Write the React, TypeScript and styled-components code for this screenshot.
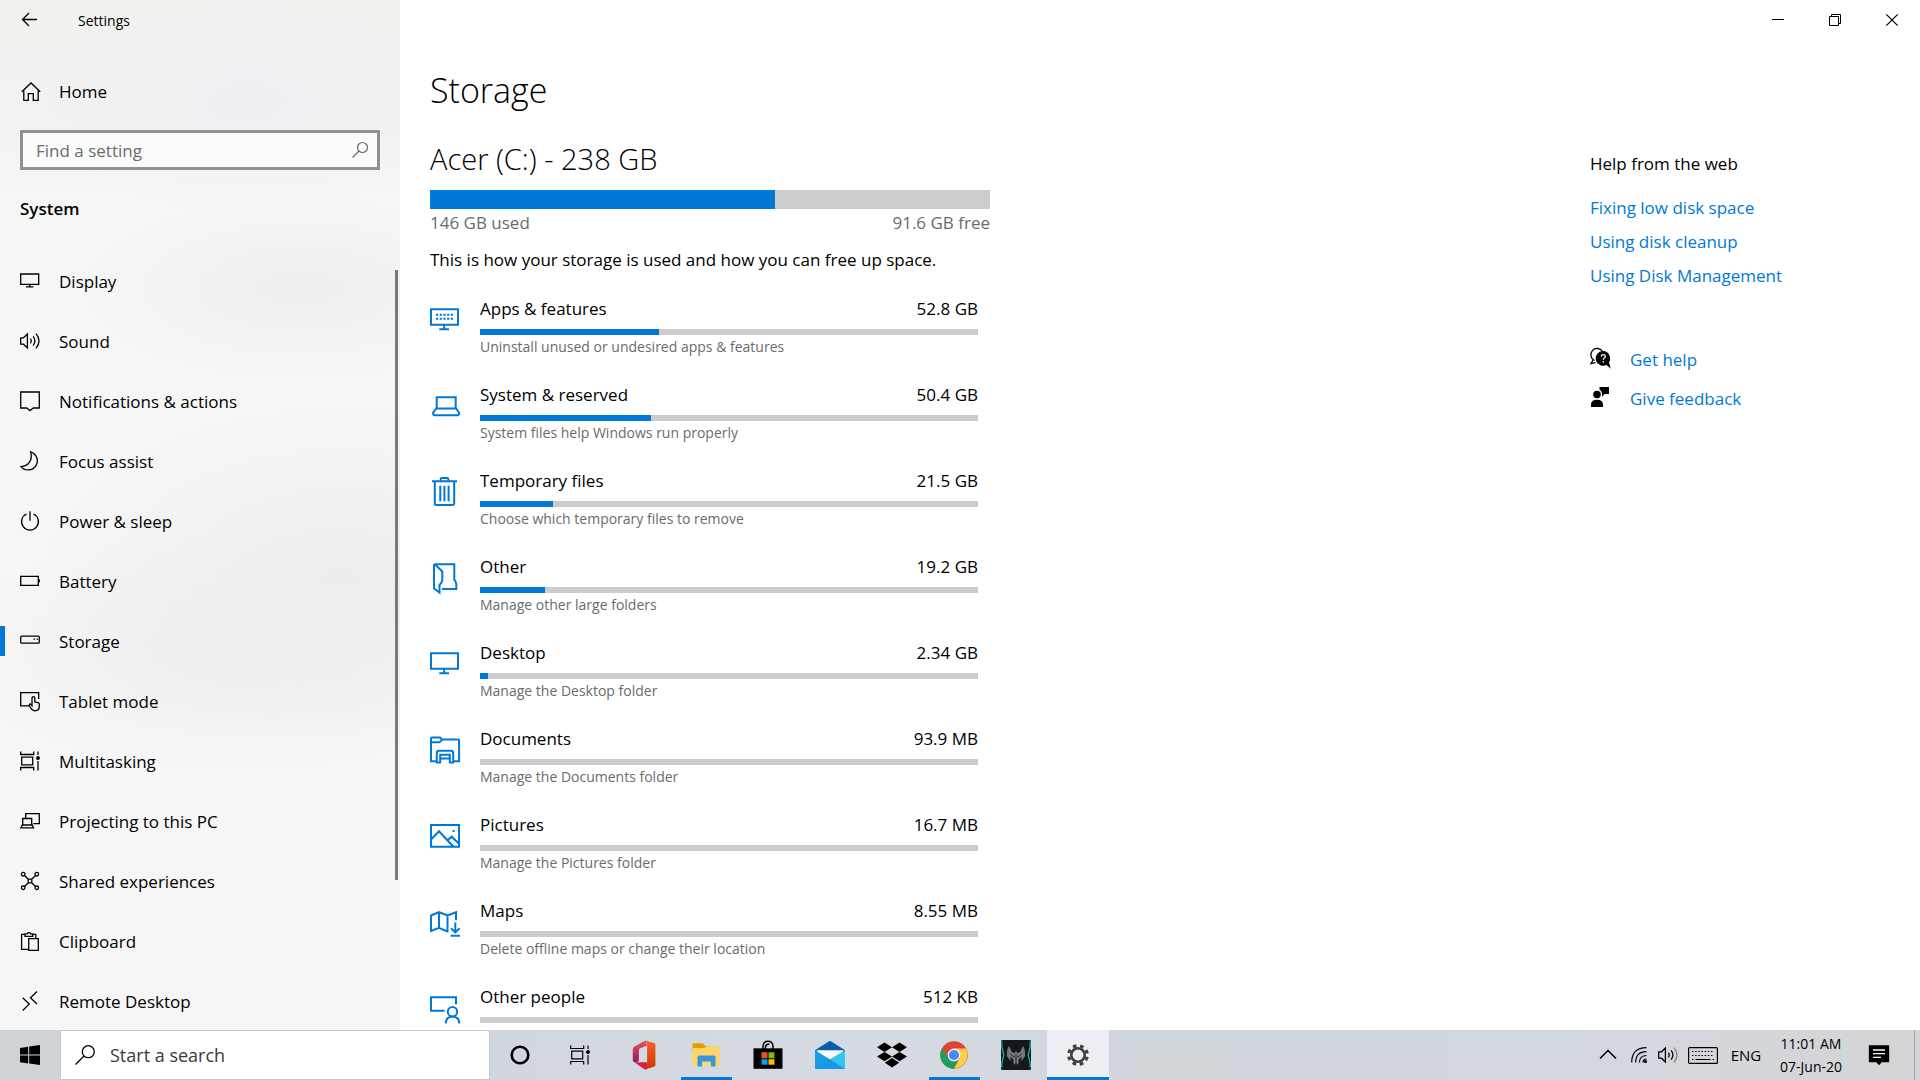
import React from "react";
import styled, { createGlobalStyle, css } from "styled-components";

const ACCENT = "#0078d7";
const FONT = '"Segoe UI", "Open Sans", "Noto Sans", sans-serif';

const GlobalStyle = createGlobalStyle`
  *, *::before, *::after { box-sizing: border-box; }
  body { margin: 0; background: #fff; color: #000; font-family: ${FONT}; font-size: 17px; line-height: 24px; overflow: hidden; }
  button, input { font: inherit; color: inherit; }
  h1, h2, h3, p, ul { margin: 0; padding: 0; font-weight: 400; }
  ul { list-style: none; }
  a { text-decoration: none; }
  svg { display: block; flex: none; overflow: visible; }
`;

/* ---------- icon plumbing ---------- */

const LineSvg = styled.svg<{ $weight?: number }>`
  fill: none;
  stroke: currentColor;
  stroke-width: ${(p) => p.$weight ?? 1.3};
`;

type GlyphProps = { size?: number; weight?: number; children: React.ReactNode };

const Glyph = ({ size = 20, weight, children }: GlyphProps) => (
  <LineSvg width={size} height={size} viewBox={`0 0 ${size} ${size}`} $weight={weight} aria-hidden="true">
    {children}
  </LineSvg>
);

const SpeakerPaths = ({ faint = false }: { faint?: boolean }) => (
  <>
    <path d="M.7 6.8h2.8L7.4 3v14L3.5 13.2H.7z" />
    <path d="M10.5 7.6q1.6 2.4 0 4.8" />
    <path d="M13.2 5.4q3.4 4.6 0 9.2" />
    <path d="M16 2.7q6 7.3 0 14.6" opacity={faint ? 0.4 : 1} />
  </>
);

const TaskViewPaths = () => (
  <>
    <path d="M.7 .5v3h13v-3M.7 19.5v-3h13v3M1.700 6.200h11v7.600h-11zM18 .5v3.400M18 10v9.500" />
    <circle cx="18" cy="7" r="1.3" fill="currentColor" />
  </>
);

/* ---------- window shell ---------- */

const Screen = styled.div`
  display: flex;
  flex-direction: column;
  height: 100vh;
`;

const Window = styled.div`
  flex: 1;
  min-height: 0;
  display: flex;
`;

const Sidebar = styled.aside`
  width: 400px;
  flex: none;
  display: flex;
  flex-direction: column;
  background:
    radial-gradient(ellipse 210px 110px at 62% 10%, #eeeff3 0%, transparent 100%),
    radial-gradient(ellipse 220px 90px at 75% 28%, #eeeeee 0%, transparent 100%),
    radial-gradient(ellipse 300px 170px at 85% 56%, #ecedee 0%, transparent 100%),
    radial-gradient(ellipse 300px 120px at 60% 63%, #eeeeee 0%, transparent 100%),
    linear-gradient(#f1f1ee 0, #f2f2f1 12%, #f6f6f6 19%, #f6f6f6 100%);
`;

const TitleRow = styled.div`
  display: flex;
  align-items: center;
  height: 40px;
  font-size: 14px;
`;

const BackButton = styled.button`
  width: 60px;
  height: 40px;
  padding: 0 0 0 20px;
  border: 0;
  background: none;
`;

const AppName = styled.span`
  padding: 2px 0 0 18px;
`;

const HomeLink = styled.a`
  display: flex;
  align-items: center;
  gap: 18px;
  height: 50px;
  margin-top: 27px;
  padding-left: 21px;
  color: #000;
`;

const SearchField = styled.label`
  display: flex;
  align-items: center;
  height: 40px;
  margin: 13px 20px 0;
  padding: 0 7px 0 13px;
  border: 3px solid #919191;
  background: #fafbfb;
  color: #6b6b6b;
`;

const SearchInput = styled.input`
  flex: 1;
  min-width: 0;
  padding: 2px 0 0;
  border: 0;
  outline: 0;
  background: none;
  &::placeholder { color: #6b6b6b; opacity: 1; }
`;

const Section = styled.h2`
  padding: 27px 20px 30px;
  font-size: 17px;
  line-height: 24px;
  && { font-weight: 600; }
`;

const NavArea = styled.div`
  flex: 1;
  min-height: 0;
  overflow: hidden;
  display: flex;
`;

const NavList = styled.ul`
  flex: 1;
`;

const NavLink = styled.a<{ $current?: boolean }>`
  display: flex;
  align-items: center;
  gap: 19px;
  height: 60px;
  color: #000;
  &::before {
    content: "";
    width: 5px;
    height: 30px;
    margin-right: -4px;
    background: ${(p) => (p.$current ? ACCENT : "transparent")};
  }
`;

const NavLabel = styled.span`
  padding-top: 2px;
`;

const ScrollThumb = styled.div`
  width: 3px;
  height: 610px;
  margin: 19px 2px 0 0;
  background: #7a7a7a;
`;

const Main = styled.main`
  flex: 1;
  min-width: 0;
  display: flex;
  flex-direction: column;
`;

const WindowControls = styled.div`
  display: flex;
  justify-content: flex-end;
  height: 40px;
`;

const ControlButton = styled.button`
  display: grid;
  place-items: center;
  width: 57px;
  height: 40px;
  padding: 0;
  border: 0;
  background: none;
`;

const Columns = styled.div`
  flex: 1;
  min-height: 0;
  display: flex;
  justify-content: space-between;
  margin-bottom: 6px;
  padding-left: 30px;
  overflow: hidden;
`;

const Content = styled.section`
  width: 560px;
`;

const PageTitle = styled.h1`
  padding-top: 26px;
  font-size: 34px;
  line-height: 48px;
  && { font-weight: 300; }
`;

const DriveTitle = styled.h2`
  padding: 25px 0 11px;
  font-size: 29px;
  line-height: 40px;
  && { font-weight: 300; }
`;

const Meter = styled.div<{ $thick?: boolean }>`
  height: ${(p) => (p.$thick ? 19 : 6)}px;
  background: #ccc;
`;

const MeterFill = styled.div`
  height: 100%;
  background: ${ACCENT};
`;

const Spread = styled.div<{ $muted?: boolean }>`
  display: flex;
  justify-content: space-between;
  ${(p) => p.$muted && css`
    padding-top: 2px;
    color: #6b6b6b;
  `}
`;

const Intro = styled.p`
  padding: 13px 0 25px;
`;

const Row = styled.li`
  display: flex;
  gap: 20px;
  height: 86px;
  padding-right: 12px;
`;

const RowIcon = styled.span`
  padding-top: 7px;
  color: ${ACCENT};
`;

const RowBody = styled.div`
  flex: 1;
`;

const RowHead = styled(Spread)`
  padding-bottom: 8px;
`;

const RowNote = styled.p`
  font-size: 14px;
  line-height: 24px;
  color: #6b6b6b;
`;

const Help = styled.aside`
  width: 330px;
  padding-top: 112px;
`;

const HelpTitle = styled.h3`
  padding-bottom: 15px;
  font-size: 17px;
  line-height: 24px;
`;

const WebLink = styled.a`
  display: block;
  padding: 5px 0;
  color: ${ACCENT};
`;

const SupportList = styled.div`
  padding-top: 50px;
`;

const SupportLink = styled.a`
  display: flex;
  gap: 20px;
  height: 39px;
  padding-top: 5px;
  color: ${ACCENT};
  svg { color: #000; }
`;

/* ---------- taskbar ---------- */

const Taskbar = styled.footer`
  flex: none;
  display: flex;
  align-items: stretch;
  height: 50px;
  background: linear-gradient(90deg, #cfd3d6 0, #d2d6df 28%, #d6dae2 45%, #d0d5da 62%, #d3d7e0 82%, #d5d6da 90%, #d4d4d7 100%);
`;

const TaskButton = styled.button<{ $width?: number; $running?: boolean; $focused?: boolean }>`
  display: grid;
  place-items: center;
  width: ${(p) => p.$width ?? 62}px;
  padding: 0;
  border: 0;
  background: ${(p) => (p.$focused ? "#eceef3" : "none")};
  ${(p) => p.$running && css`
    background-image: linear-gradient(${ACCENT}, ${ACCENT});
    background-repeat: no-repeat;
    background-position: bottom center;
    background-size: ${p.$focused ? "100%" : "51px"} 3px;
  `}
`;

const TaskSearch = styled.label`
  display: flex;
  align-items: center;
  gap: 15px;
  width: 430px;
  padding-left: 14px;
  border: 1px solid #c8c8c8;
  background: #fff;
  font-size: 18px;
`;

const TaskSearchInput = styled(SearchInput)`
  padding: 0;
  &::placeholder { color: #3a3a3a; }
`;

const Apps = styled.div`
  display: flex;
  margin-left: 3px;
`;

const Tray = styled.div`
  display: flex;
  align-items: center;
  margin-left: auto;
  font-size: 15px;
`;

const TrayButton = styled.button<{ $width: number }>`
  display: grid;
  place-items: center;
  width: ${(p) => p.$width}px;
  height: 50px;
  padding: 0;
  border: 0;
  background: none;
`;

const Clock = styled(TrayButton)`
  align-content: center;
  font-size: 14px;
  line-height: 23px;
`;

const ActionCenter = styled(TrayButton)`
  margin-right: 10px;
`;

const ShowDesktop = styled.button`
  width: 6px;
  height: 50px;
  padding: 0;
  border: 0;
  border-left: 1px solid #a4a6aa;
  background: none;
`;

/* ---------- data ---------- */

const navItems: { label: string; current?: boolean; icon: React.ReactNode }[] = [
  { label: "Display", icon: <path d="M.7 3h18v10.3H.7zM9.7 13.3v2.500M6 15.800h7.400" /> },
  { label: "Sound", icon: <SpeakerPaths /> },
  { label: "Notifications & actions", icon: <path d="M.7 1h18.600v16h-6l-3.300 2.600L6.700 17h-6z" /> },
  { label: "Focus assist", icon: <path d="M10.600.9A9.200 9.200 0 1 1 1 15.600C8.500 15.200 13 9 10.600 .9z" /> },
  { label: "Power & sleep", icon: <path d="M10 .3v9.500M6.500 3a8.400 8.400 0 1 0 7 0" /> },
  { label: "Battery", icon: <><path d="M.7 5.300h17.600v9H.7z" /><path d="M19.300 8.300v3" /></> },
  {
    label: "Storage",
    current: true,
    icon: <><rect x=".7" y="5.200" width="18.600" height="7" rx="1" /><path d="M13.500 8.200h1.500M16.500 8.200H18" /></>,
  },
  {
    label: "Tablet mode",
    icon: (
      <>
        <path d="M9 14.800H.7V1.600h18v6.500" />
        <path d="M12 14.600V7a1.400 1.400 0 0 1 2.800 0v4l3.200.7q1.300.4 1.300 1.700v2.200c0 2.600-1.800 4.200-4.300 4.200-3 0-4.200-1.800-5.600-5.200-.6-1.500.9-2 1.600-1.200z" />
      </>
    ),
  },
  { label: "Multitasking", icon: <TaskViewPaths /> },
  {
    label: "Projecting to this PC",
    icon: <path d="M5.700 7.500V2.700h13.600v10h-6M2.700 14V7.500h9V14M2.300 14h9.900l1.300 2.800H.8z" />,
  },
  {
    label: "Shared experiences",
    icon: (
      <>
        <path d="M4.500 4.500l3.800 3.800M15.500 4.500l-3.800 3.800M4.500 15.500l3.800-3.800M15.500 15.500l-3.800-3.800M8.200 8.200h3.600v3.600H8.200z" />
        <circle cx="3.200" cy="3.200" r="1.800" /><circle cx="16.800" cy="3.200" r="1.800" />
        <circle cx="3.200" cy="16.800" r="1.800" /><circle cx="16.800" cy="16.800" r="1.800" />
      </>
    ),
  },
  {
    label: "Clipboard",
    icon: <path d="M8.300 18.300H1.600V3.300H5M12.500 3.300h3.300v4.200M5 5.300V2.800h2.200a1.800 1.800 0 0 1 3.300 0h2.200v2.500zM8.700 7.700h9.600v11.600H8.700z" />,
  },
  { label: "Remote Desktop", icon: <path d="M2.700 6.700l6.500 6.400-6.500 6.400M17 .5l-6.500 6.200 6.500 6.300" /> },
];

const storageRows: { name: string; size: string; note?: string; fill: number; icon: React.ReactNode }[] = [
  {
    name: "Apps & features", size: "52.8 GB", note: "Uninstall unused or undesired apps & features", fill: 36,
    icon: (
      <>
        <path d="M1 5.200h27v15.600H1zM14.200 20.800v4M9.300 25.200h9.800" />
        <path d="M6 10.700h17M6 14.700h17" strokeDasharray="2.200 1.500" />
      </>
    ),
  },
  {
    name: "System & reserved", size: "50.4 GB", note: "System files help Windows run properly", fill: 34.3,
    icon: <path d="M6.700 18V7.300h19V18M6.300 18.500h19.800l3 4.300q0 2.400-1.500 2.400H4.600Q3 25.200 3 22.800z" />,
  },
  {
    name: "Temporary files", size: "21.5 GB", note: "Choose which temporary files to remove", fill: 14.7,
    icon: <path d="M2 5.300h25M10.700 5V3q0-1 1-1h5.600q1 0 1 1v2M4.800 5.300v22q0 1.700 1.700 1.700h16q1.700 0 1.700-1.700v-22M10.300 9.700v15.600M14.400 9.700v15.600M18.600 9.700v15.600" />,
  },
  {
    name: "Other", size: "19.2 GB", note: "Manage other large folders", fill: 13.1,
    icon: <path d="M4 2.200h20.300v15.500q2 2 2 4.500v4.700H12M4 2.200V26.500l5.500 4V23q2.800-2.600 2.800-5.600V9.500L5 2.600" />,
  },
  {
    name: "Desktop", size: "2.34 GB", note: "Manage the Desktop folder", fill: 1.6,
    icon: <path d="M1 5.200h27v15.600H1zM14.200 20.800v4M9.300 25.200h9.800" />,
  },
  {
    name: "Documents", size: "93.9 MB", note: "Manage the Documents folder", fill: 0,
    icon: (
      <>
        <path d="M6.500 27.200H1V4.500q0-1 1-1h8l2.200 2h16q.9 0 .9 1v20.700h-5.500M1 8.200h8.500l2.700-2.700" />
        <path d="M6.800 28.500V19q0-2.200 2.200-2.200h12q2.200 0 2.200 2.200v9.500h-3.400v-7.700H10.200v7.700zM10.200 24.500h9.600" />
      </>
    ),
  },
  {
    name: "Pictures", size: "16.7 MB", note: "Manage the Pictures folder", fill: 0,
    icon: (
      <>
        <path d="M1 5h28v21.800H1zM1 19.500l8-8.300 14.500 15.600M17.500 20.200l4.200-3.500 7.300 7" />
        <path d="M22.500 11h2" />
      </>
    ),
  },
  {
    name: "Maps", size: "8.55 MB", note: "Delete offline maps or change their location", fill: 0,
    icon: <path d="M18.500 25.300l-1.200.2-8.300-3.700-8 3.200V9.500l8-3.300 8.500 3.300L26 6.200v8M9 6.200v15.600M17.500 9.500v16M25.300 16.500v9.800M21 22.200l4.300 4.200 4.300-4.200M20.700 29.800H30" />,
  },
  {
    name: "Other people", size: "512 KB", fill: 0,
    icon: (
      <>
        <path d="M14.500 18.800H1V5.200h25v7" />
        <circle cx="22.500" cy="19.800" r="4.700" />
        <path d="M15.700 31.500q.5-7 6.800-7t6.800 7" />
      </>
    ),
  },
];

/* ---------- taskbar logos ---------- */

const WindowsLogo = () => (
  <svg width="20" height="20" viewBox="0 0 20 20" aria-hidden="true">
    <path d="M0 2.900L8.200 1.700v7.900H0zM9.200 1.600L20 0v9.600H9.200zM0 10.500h8.200v7.900L0 17.200zM9.200 10.500H20V20L9.200 18.500z" />
  </svg>
);

const OfficeLogo = () => (
  <svg width="24" height="30" viewBox="0 0 24 30" aria-hidden="true">
    <defs>
      <linearGradient id="officeLeft" x1="0" y1="0" x2="0" y2="1"><stop stopColor="#e8505c" /><stop offset="1" stopColor="#8d1c5b" /></linearGradient>
      <linearGradient id="officeRight" x1="0" y1="0" x2="0" y2="1"><stop stopColor="#f5622c" /><stop offset="1" stopColor="#cf3600" /></linearGradient>
    </defs>
    <path d="M13.500.6L2.500 6.500Q.8 7.500.8 9.500v10.600q0 2 1.600 2.200l3-.3q1.500-.6 1.500-2.600V10.200q0-1.300 1.300-1.900L15 5.500z" fill="url(#officeLeft)" />
    <path d="M2.500 22.300h12.600v7L12.700 29.400z" fill="#d8203f" />
    <path d="M13.500.6l8.500 2.500q1.400.5 1.400 2v19.600q0 1.500-1.400 2l-9.300 2.800q2.400-.7 2.400-3V5.500q0-3-1.600-4.900z" fill="url(#officeRight)" />
  </svg>
);

const ExplorerLogo = () => (
  <svg width="28" height="24" viewBox="0 0 28 24" aria-hidden="true">
    <path d="M.5 1.200q0-1 1-1H11l2.500 3H26q1 0 1 1V9H.5z" fill="#e0a000" />
    <path d="M.5 5h11.800l2-1.800H26.500q1 0 1 1v17.500q0 1-1 1H1.500q-1 0-1-1z" fill="#ffd666" />
    <path d="M5.500 23.500V14q0-1.500 1.500-1.500h15q1.500 0 1.500 1.500v9.500H19v-4q0-1-1-1h-7q-1 0-1 1v4z" fill="#3a95dc" />
  </svg>
);

const StoreLogo = () => (
  <svg width="30" height="30" viewBox="0 0 30 30" aria-hidden="true">
    <path d="M10 9V6.500q.3-5.200 5-5.200t5 5.200V9M12.500 9V6.800q.3-2.600 3.800-2.800" fill="none" stroke="#000" strokeWidth="1.500" />
    <path d="M.5 8.300h29v20.500h-29z" />
    <path d="M8.500 12.300h6v6h-6z" fill="#f25022" /><path d="M15.500 12.300h6v6h-6z" fill="#7fba00" />
    <path d="M8.500 19.200h6v5.500h-6z" fill="#00a4ef" /><path d="M15.500 19.200h6v5.500h-6z" fill="#ffb900" />
  </svg>
);

const MailLogo = () => (
  <svg width="30" height="30" viewBox="0 0 30 30" aria-hidden="true">
    <path d="M0 10.200L13.700 1.400q1.300-.8 2.600 0L30 10.200v3H0z" fill="#0a5cae" />
    <path d="M1.500 10.300h27L24 19H6z" fill="#fafafa" />
    <path d="M0 10.200l30 18.300v.5H1q-1 0-1-1z" fill="#1c9ae4" />
    <path d="M30 10.200v17.800q0 1-1 1L15 19.300z" fill="#35c4f2" />
    <path d="M1 29l14-9.700L29.500 29z" fill="#1797e6" />
  </svg>
);

const DropboxLogo = () => (
  <svg width="30" height="26" viewBox="0 0 30 26" aria-hidden="true">
    <path d="M7.500.5L15 5.200 7.500 9.900 0 5.200zM22.500.5L30 5.200l-7.500 4.700L15 5.200zM7.500 9.900L15 14.600l-7.500 4.700L0 14.600zM22.500 9.900l7.500 4.700-7.500 4.700-7.500-4.700zM7.800 20.700l7.200-4.600 7.200 4.600-7.200 4.700z" />
  </svg>
);

const ChromeLogo = () => (
  <svg width="28" height="28" viewBox="0 0 28 28" aria-hidden="true">
    <circle cx="14" cy="14" r="13.700" fill="#dc4437" />
    <path d="M2.140 7.150A13.700 13.700 0 0 0 14 27.700L19.540 17.200 14 20.400 8.460 17.200z" fill="#1a9f5f" />
    <path d="M14 27.700A13.700 13.700 0 0 0 25.860 7.600H14v0l5.540 9.600z" fill="#ffce44" />
    <circle cx="14" cy="14" r="6.400" fill="#f2f2f2" />
    <circle cx="14" cy="14" r="5.100" fill="#4a8af4" />
  </svg>
);

const PredatorLogo = () => (
  <svg width="30" height="30" viewBox="0 0 30 30" aria-hidden="true">
    <rect width="30" height="30" rx="1.500" fill="#151718" />
    <path d="M.8 1.500v5.500l2 8-2 8v4.500M29.200 1.500v5.500l-2 8 2 8v4.500" fill="none" stroke="#18aebc" strokeWidth="1.300" />
    <path d="M8 6l2.500 5.500 3 2 .5-2h2l.5 2 3-2L22 6q2.500 3 2 10l-3.500 5.500V17L18 19l-1 6-2-2.500L13 25l-1-6-2.500-2v4.500L6 16q-.5-7 2-10z" fill="#74787b" />
    <path d="M15 14v8M9.500 14l4 3.500M20.500 14l-4 3.500" stroke="#202224" strokeWidth="1" />
  </svg>
);

const GearLogo = () => (
  <svg width="22" height="22" viewBox="0 0 22 22" fill="none" stroke="#3f4042" aria-hidden="true">
    <circle cx="11" cy="11" r="9.300" strokeWidth="3.200" strokeDasharray="3.600 3.704" strokeDashoffset="-1.850" />
    <circle cx="11" cy="11" r="6.700" strokeWidth="2.600" />
  </svg>
);

const apps: { name: string; logo: React.ReactNode; running?: boolean; focused?: boolean }[] = [
  { name: "Office", logo: <OfficeLogo /> },
  { name: "File Explorer", logo: <ExplorerLogo />, running: true },
  { name: "Microsoft Store", logo: <StoreLogo /> },
  { name: "Mail", logo: <MailLogo /> },
  { name: "Dropbox", logo: <DropboxLogo /> },
  { name: "Google Chrome", logo: <ChromeLogo />, running: true },
  { name: "PredatorSense", logo: <PredatorLogo /> },
  { name: "Settings", logo: <GearLogo />, running: true, focused: true },
];

/* ---------- page ---------- */

const SettingsNav = () => (
  <Sidebar>
    <TitleRow>
      <BackButton aria-label="Back">
        <Glyph><path d="M17 9.500H2.500M9 3L2.500 9.500 9 16" /></Glyph>
      </BackButton>
      <AppName>Settings</AppName>
    </TitleRow>
    <HomeLink href="#home">
      <Glyph><path d="M.8 9.800L10 1l9.200 8.800M2.800 8.500v9.800h4.500v-6.600h5v6.600h4.900V8.500" /></Glyph>
      Home
    </HomeLink>
    <SearchField>
      <SearchInput type="text" placeholder="Find a setting" aria-label="Find a setting" />
      <Glyph weight={1.2}><circle cx="12.500" cy="7.500" r="5" /><path d="M9 11l-6.500 6.500" /></Glyph>
    </SearchField>
    <Section>System</Section>
    <NavArea>
      <NavList>
        {navItems.map((item) => (
          <li key={item.label}>
            <NavLink href="#" $current={item.current} aria-current={item.current ? "page" : undefined}>
              <Glyph>{item.icon}</Glyph>
              <NavLabel>{item.label}</NavLabel>
            </NavLink>
          </li>
        ))}
      </NavList>
      <ScrollThumb />
    </NavArea>
  </Sidebar>
);

const StoragePage = () => (
  <Main>
    <WindowControls>
      <ControlButton aria-label="Minimize"><Glyph size={12} weight={1}><path d="M0 5.500h12" /></Glyph></ControlButton>
      <ControlButton aria-label="Restore"><Glyph size={12} weight={1}><path d="M.5 2.500h9v9h-9zM2.500 2.500v-2h9v9h-2" /></Glyph></ControlButton>
      <ControlButton aria-label="Close"><Glyph size={12} weight={1.200}><path d="M.3.3l11.400 11.400M11.700.3L.3 11.700" /></Glyph></ControlButton>
    </WindowControls>
    <Columns>
      <Content>
        <PageTitle>Storage</PageTitle>
        <DriveTitle>Acer (C:) - 238 GB</DriveTitle>
        <Meter $thick role="meter" aria-label="Drive usage" aria-valuenow={61.6}>
          <MeterFill style={{ width: "61.6%" }} />
        </Meter>
        <Spread $muted><span>146 GB used</span><span>91.6 GB free</span></Spread>
        <Intro>This is how your storage is used and how you can free up space.</Intro>
        <ul>
          {storageRows.map((row) => (
            <Row key={row.name}>
              <RowIcon><Glyph size={30} weight={2}>{row.icon}</Glyph></RowIcon>
              <RowBody>
                <RowHead><span>{row.name}</span><span>{row.size}</span></RowHead>
                <Meter role="meter" aria-label={row.name} aria-valuenow={row.fill}>
                  <MeterFill style={{ width: `${row.fill}%` }} />
                </Meter>
                {row.note && <RowNote>{row.note}</RowNote>}
              </RowBody>
            </Row>
          ))}
        </ul>
      </Content>
      <Help>
        <HelpTitle>Help from the web</HelpTitle>
        <WebLink href="#low-space">Fixing low disk space</WebLink>
        <WebLink href="#cleanup">Using disk cleanup</WebLink>
        <WebLink href="#management">Using Disk Management</WebLink>
        <SupportList>
          <SupportLink href="#help">
            <Glyph>
              <path d="M4.500 12.500A6.300 6.300 0 1 1 12.500 3.500M3.500 11.200L1 15.600l4.500-1" />
              <path d="M13 3.700a6.700 6.700 0 1 0 3.500 12.400l3 2.700-1.300-4.500A6.700 6.700 0 0 0 13 3.700z" fill="currentColor" />
              <path d="M11.200 8.600q.2-1.900 2.100-1.900t2 1.800q0 1-1.200 1.700-.8.600-.8 1.600M13.300 13v1.500" stroke="#fff" />
            </Glyph>
            Get help
          </SupportLink>
          <SupportLink href="#feedback">
            <Glyph weight={0}>
              <g fill="currentColor">
                <circle cx="7" cy="7.500" r="3.800" />
                <path d="M1 20v-2.500Q1 12.700 7 12.700t6 4.800V20zM9.500 0H19v7h-4.200L12 9.700V6.500q-.5-3-2.500-3.700z" />
              </g>
            </Glyph>
            Give feedback
          </SupportLink>
        </SupportList>
      </Help>
    </Columns>
  </Main>
);

const SystemTaskbar = () => (
  <Taskbar>
    <TaskButton $width={60} aria-label="Start"><WindowsLogo /></TaskButton>
    <TaskSearch>
      <Glyph><circle cx="13.300" cy="6.700" r="6" /><path d="M9 11L.5 19.500" /></Glyph>
      <TaskSearchInput type="text" placeholder="Start a search" aria-label="Start a search" />
    </TaskSearch>
    <TaskButton $width={60} aria-label="Cortana"><Glyph weight={2.600}><circle cx="10" cy="10" r="8.300" /></Glyph></TaskButton>
    <TaskButton $width={60} aria-label="Task View"><Glyph weight={1.200}><TaskViewPaths /></Glyph></TaskButton>
    <Apps>
      {apps.map((app) => (
        <TaskButton key={app.name} aria-label={app.name} $running={app.running} $focused={app.focused}>
          {app.logo}
        </TaskButton>
      ))}
    </Apps>
    <Tray>
      <TrayButton $width={32} aria-label="Show hidden icons"><Glyph weight={1.500}><path d="M2 13.500L10 5.500l8 8" /></Glyph></TrayButton>
      <TrayButton $width={30} aria-label="Network">
        <Glyph size={16} weight={1.200}>
          <path d="M.7 15.500Q.7.700 15.500.7M4.700 15.500Q4.700 4.700 15.500 4.700M8.500 15.500Q8.500 8.500 15.500 8.500M12 15.500Q12 12 15.500 12" />
          <circle cx="14.500" cy="14.500" r="1" fill="currentColor" />
        </Glyph>
      </TrayButton>
      <TrayButton $width={28} aria-label="Volume"><Glyph><SpeakerPaths faint /></Glyph></TrayButton>
      <TrayButton $width={42} aria-label="Touch keyboard">
        <Glyph size={30} weight={1.200}>
          <rect x=".6" y="7.600" width="28.800" height="15.800" rx="1" />
          <path d="M4 11.500h22M4 15.500h22" strokeDasharray="1.500 1.660" />
          <path d="M4 19.500h1.500M7.500 19.500h15M24.500 19.500H26" />
        </Glyph>
      </TrayButton>
      <TrayButton $width={44} aria-label="Input language ENG">ENG</TrayButton>
      <Clock $width={86}><span>11:01 AM</span><span>07-Jun-20</span></Clock>
      <ActionCenter $width={50} aria-label="Notifications">
        <Glyph>
          <path d="M.5 1h19v15.500h-7L10 19.300l-2.500-2.800h-7z" fill="currentColor" />
          <path d="M4 5h12M4 8.700h12M4 12.400h8" stroke="#fff" />
        </Glyph>
      </ActionCenter>
      <ShowDesktop aria-label="Show desktop" />
    </Tray>
  </Taskbar>
);

export default function App() {
  return (
    <Screen>
      <GlobalStyle />
      <Window>
        <SettingsNav />
        <StoragePage />
      </Window>
      <SystemTaskbar />
    </Screen>
  );
}
